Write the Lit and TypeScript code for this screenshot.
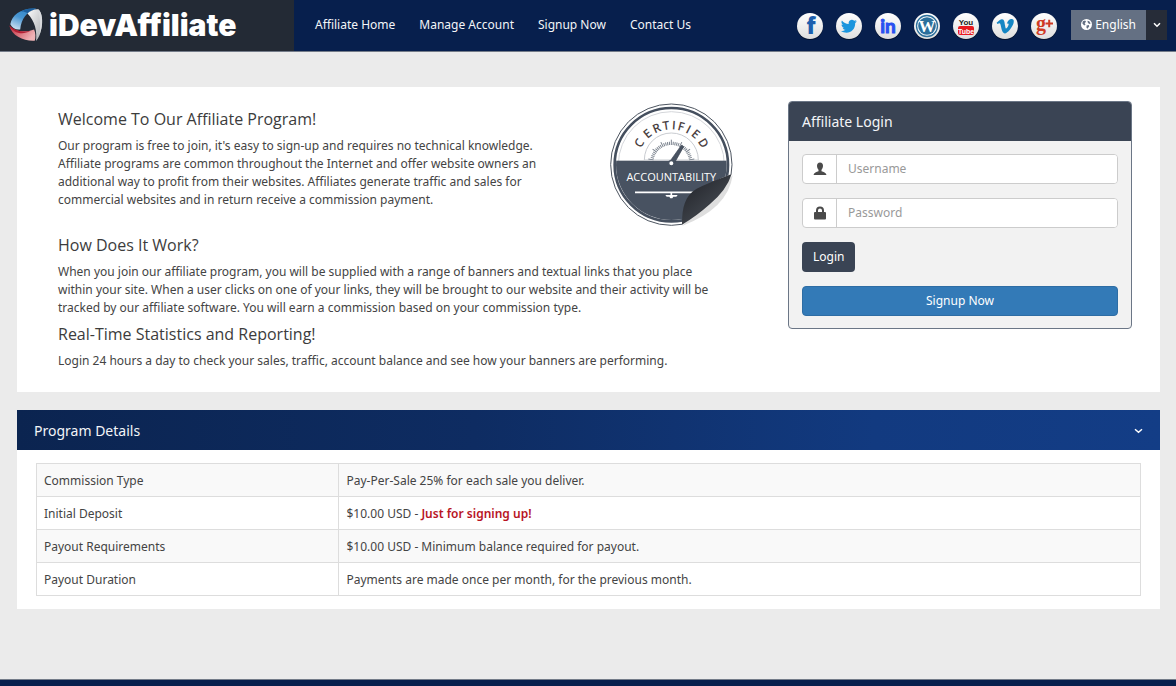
import { LitElement, html, svg, css } from "lit";
import { customElement, property } from "lit/decorators.js";

@customElement("brand-logo")
class BrandLogo extends LitElement {
  static styles = css`
    :host { display: block; }
    .brand { display: flex; align-items: center; gap: 6px; color: #fff; text-decoration: none; }
    .mark { width: 35px; height: 35px; flex: none; }
    .name { font: 900 30px/34px Inter, "Liberation Sans", sans-serif; }
  `;
  render() {
    return html`<a class="brand" href="#">
      <svg class="mark" viewBox="23 22 106 106" aria-hidden="true">
        <defs>
          <linearGradient id="b" x1="0.8" y1="0" x2="0.3" y2="1"><stop offset="0" stop-color="#2f86c8"/><stop offset=".5" stop-color="#4795d2"/><stop offset="1" stop-color="#c5dcf0"/></linearGradient>
          <linearGradient id="r" x1="0" y1="0" x2="1" y2=".5"><stop offset="0" stop-color="#c0283a"/><stop offset="1" stop-color="#f0b3b6"/></linearGradient>
          <linearGradient id="w" x1="0" y1="0" x2="1" y2="1"><stop offset="0" stop-color="#fafafa"/><stop offset="1" stop-color="#a9acb0"/></linearGradient>
        </defs>
        <path fill="url(#b)" d="M30 74C35 46 64 24 108 27C80 35 63 58 60 90C48 92 36 86 30 74Z"/>
        <path fill="#1c5f9f" d="M62 36C78 27 96 25 110 28C98 30 90 35 82 41C76 37 69 35 62 36Z"/>
        <path fill="url(#w)" d="M82 42C90 33 104 28 114 29C126 38 129 66 124 88C121 104 115 118 108 125C111 94 105 66 82 42Z"/>
        <path fill="#d9dbde" d="M115 29C127 40 129 66 124 88L118 108C122 78 121 50 112 32Z"/>
        <path fill="url(#r)" d="M27 78C38 94 72 102 102 90C107 101 107 115 104 124C72 126 34 110 27 78Z"/>
        <path fill="#b31f33" d="M27 77C40 92 68 100 90 95C66 108 38 101 27 77Z"/>
      </svg>
      <span class="name">iDevAffiliate</span>
    </a>`;
  }
}

const glyphs: Record<string, unknown> = {
  Facebook: svg`<text x="14" y="21" class="fb">f</text>`,
  Twitter: svg`<path fill="#1b95dd" d="M5 18.1c1.700.1 3.200-.3 4.500-1.300-1.500-.1-2.400-.9-2.900-2.100.5.1.9.1 1.400-.1-1.600-.4-2.500-1.600-2.500-3.200.5.200.9.400 1.400.4C5.400 10.700 5 9 5.900 7.500c1.800 2.100 4 3.300 6.800 3.500-.5-2.300.9-4.200 3-4.300 1 0 1.900.4 2.500 1.100.8-.2 1.500-.4 2.200-.8-.2.800-.7 1.300-1.400 1.800.7-.1 1.300-.3 1.900-.5-.5.7-1 1.200-1.700 1.700.2 5.800-4 9.800-8.700 9.800-2 0-3.900-.6-5.500-1.700z"/>`,
  LinkedIn: svg`<text x="13" y="20" class="li">in</text>`,
  WordPress: svg`<circle cx="13" cy="13" r="10.500" fill="#f4f7f9" stroke="#2b6f9b" stroke-width="1.300"/><circle cx="13" cy="13" r="8.800" fill="#2b6f9b"/><text x="13" y="19" class="wp">W</text>`,
  YouTube: svg`<text x="13" y="12" class="you">You</text><rect x="5" y="13" width="16" height="9" rx="2" fill="#e8191f"/><text x="13" y="20.500" class="tube">Tube</text>`,
  Vimeo: svg`<path fill="#1586c4" d="M4.600 9.700 C6.600 8 8.600 6.200 10 6.200C12.400 6.100 12.500 9.300 13 12.200C13.300 14.200 13.700 15.600 14.200 15.600C14.900 15.600 16.600 12.700 16.600 11.600C16.700 10.500 15.900 10.300 14.800 10.700C15.800 7.400 17.700 5.700 20 6C21.900 6.200 22.100 8 21.500 10.200C20.500 13.700 15.700 20.400 12.800 20.400C9.800 20.400 9.400 14.400 8.400 11.300C8 10 7.300 9.900 5.500 11.100Z"/>`,
  "Google Plus": svg`<text x="10" y="17" class="gp">g</text><path stroke="#cf3a24" stroke-width="2" d="M14.500 10.500h7.500M18.200 6.800v7.500"/>`,
};

@customElement("social-link")
class SocialLink extends LitElement {
  @property() network = "";
  static styles = css`
    :host { display: block; }
    .link { display: block; width: 26px; height: 26px; }
    .icon { display: block; width: 26px; height: 26px; overflow: visible; }
    text { text-anchor: middle; }
    .fb { font: 800 22px "Open Sans", sans-serif; fill: #1d5fae; }
    .li { font: 700 19px Lato, sans-serif; fill: #2a50f0; stroke: #2a50f0; stroke-width: 1px; }
    .wp { font: 700 17px "Liberation Serif", serif; fill: #fff; }
    .you { font: 700 8px "Liberation Sans", sans-serif; fill: #222; }
    .tube { font: 700 7px "Liberation Sans", sans-serif; fill: #fff; }
    .gp { font: 700 20px "Liberation Serif", serif; fill: #cf3a24; }
  `;
  render() {
    return html`<a class="link" href="#" aria-label=${this.network}>
      <svg class="icon" viewBox="0 0 26 26" aria-hidden="true">
        <defs><linearGradient id="disc" x2="0" y2="1"><stop offset="0" stop-color="#fff"/><stop offset="1" stop-color="#dedede"/></linearGradient></defs>
        <circle cx="13" cy="14" r="13" fill="#04132f"/>
        <circle cx="13" cy="13" r="13" fill="url(#disc)"/>
        ${glyphs[this.network]}
      </svg>
    </a>`;
  }
}

@customElement("site-header")
class SiteHeader extends LitElement {
  static styles = css`
    :host { display: block; }
    .bar { display: flex; align-items: stretch; min-height: 51px; background: #071f4d; border-bottom: 1px solid #747c89; }
    .logo { flex: 0 0 25%; box-sizing: border-box; padding: 0 8px 2px; display: flex; align-items: center; background: #232a35; }
    .nav { display: flex; align-items: center; gap: 24px; padding: 0 0 2px 21px; }
    .item { color: #f3f5f8; text-decoration: none; font-size: 12px; line-height: 18px; white-space: nowrap; }
    .social { display: flex; align-items: center; gap: 13px; margin-left: auto; padding-right: 14px; }
    .lang { display: flex; align-items: center; padding: 0 9px 2px 0; }
    button { font: 12px/18px "Noto Sans", "Open Sans", sans-serif; height: 30px; border: 0; color: #fff; cursor: pointer; display: flex; align-items: center; justify-content: center; }
    .current { background: #647083; gap: 3px; padding: 0 10px; }
    .more { background: #262c38; width: 21px; padding: 0; }
    .globe { width: 11px; height: 11px; }
    .chev { width: 8px; height: 6px; }
  `;
  render() {
    return html`<header class="bar">
      <div class="logo"><brand-logo></brand-logo></div>
      <nav class="nav">
        ${["Affiliate Home", "Manage Account", "Signup Now", "Contact Us"].map((t) => html`<a class="item" href="#">${t}</a>`)}
      </nav>
      <div class="social">${Object.keys(glyphs).map((n) => html`<social-link .network=${n}></social-link>`)}</div>
      <div class="lang">
        <button class="current" type="button">
          <svg class="globe" viewBox="0 0 12 12" aria-hidden="true"><circle cx="6" cy="6" r="6" fill="#fff"/><path fill="#647083" d="M2 2.500 4.500 1.500 5.500 3 4 4.500 5 6 3.500 7 1.500 5ZM7 2 9 2.500 10.500 5 9 5.500 7.500 4ZM6 7 8.500 6.500 9 8 7 10.500 6 9.500Z"/></svg>
          <span>English</span>
        </button>
        <button class="more" type="button" aria-label="Choose language">
          <svg class="chev" viewBox="0 0 8 6" aria-hidden="true"><path d="M1 1.200 4 4.200 7 1.200" fill="none" stroke="#fff" stroke-width="1.500"/></svg>
        </button>
      </div>
    </header>`;
  }
}

const arcLetters: [string, number][] = [["C", -58], ["E", -39], ["R", -23], ["T", -8], ["I", 4], ["F", 15], ["I", 27], ["E", 40], ["D", 58]];

@customElement("accountability-seal")
class AccountabilitySeal extends LitElement {
  static styles = css`
    :host { display: block; }
    .seal { display: block; width: 125px; height: 125px; overflow: visible; }
    text { text-anchor: middle; font-family: "Open Sans", sans-serif; }
    .arc { font-size: 36px; font-weight: 600; fill: #4a4142; }
    .band { font-size: 33px; fill: #fff; }
  `;
  render() {
    const ticks = Array.from({ length: 31 }, (_, i) => -80 + (i * 160) / 30);
    return html`<svg class="seal" viewBox="27 20 375 375" role="img" aria-label="Certified Accountability">
      <defs>
        <linearGradient id="fold" x1="0.250" y1="0.250" x2="0.700" y2="0.800"><stop offset="0" stop-color="#2a2d33"/><stop offset=".6" stop-color="#3a3e45"/><stop offset="1" stop-color="#24262b"/></linearGradient>
        <clipPath id="disc"><circle cx="214" cy="208" r="166"/></clipPath>
        <clipPath id="body"><path d="M0 0H430V225L395 236Q280 275 246 388L230 430H0Z"/></clipPath>
      </defs>
      <path d="M398 240Q384 340 246 392Z" fill="#dedede"/>
      <g clip-path="url(#body)">
        <circle cx="214" cy="208" r="182" fill="#fff" stroke="#4d5560" stroke-width="3"/>
        <circle cx="214" cy="208" r="170" fill="#fff" stroke="#454f5e" stroke-width="8"/>
        <circle cx="214" cy="208" r="159" fill="none" stroke="#d4d6da" stroke-width="3"/>
        <rect x="40" y="196" width="350" height="190" fill="#485261" clip-path="url(#disc)"/>
        <path d="M133 194A81 81 0 0 1 295 194Z" fill="#fff" stroke="#c9ccd1" stroke-width="3"/>
        ${ticks.map((a, i) => svg`<path transform="rotate(${a} 214 203)" d="M214 ${i % 5 ? 139 : 133}V149" stroke="#7b838e" stroke-width="3"/>`)}
        ${arcLetters.map(([c, a]) => svg`<text class="arc" transform="rotate(${a} 214 203)" x="214" y="102">${c}</text>`)}
        <path d="M209 199 244 150 251 154 221 207Z" fill="#485261" stroke="#38414e" stroke-width="2"/>
        <circle cx="214" cy="204" r="8" fill="#fff" stroke="#485261" stroke-width="4"/>
        <path d="M105 291H320M214 291V303" stroke="#fff" stroke-width="5"/>
        <path d="M196 299H233L229 304H220L217 309H211L208 304H200Z" fill="#fff"/>
      </g>
      <path d="M395 236Q322 264 290 280C255 300 246 335 246 388Q290 362 330 326Q380 284 395 236Z" fill="url(#fold)"/>
      <text class="band" x="214" y="257">ACCOUNTABILITY</text>
    </svg>`;
  }
}

@customElement("login-card")
class LoginCard extends LitElement {
  static styles = css`
    :host { display: block; }
    .card { border: 1px solid #6b7686; border-radius: 4px; overflow: hidden; background: #f2f2f2; }
    .title { margin: 0; padding: 9px 13px; font-size: 14px; line-height: 21px; font-weight: 400; color: #f3f5f8; background: #3a4454; }
    .form { display: flex; flex-direction: column; gap: 14px; padding: 13px 13px 12px; align-items: stretch; }
    .group { display: flex; height: 30px; box-sizing: border-box; border: 1px solid #ccc; border-radius: 4px; background: #fff; overflow: hidden; }
    .addon { width: 33px; flex: none; display: flex; align-items: center; justify-content: center; border-right: 1px solid #ccc; }
    .glyph { width: 14px; height: 14px; }
    .field { flex: 1; min-width: 0; border: 0; outline: 0; padding: 0 11px; background: #fff; color: #444; font: 12px/18px "Noto Sans", "Open Sans", sans-serif; }
    .field::placeholder { color: #999; opacity: 1; }
    .btn { height: 30px; padding: 0 11px; border: 0; border-radius: 4px; color: #fff; font: 12px/18px "Noto Sans", "Open Sans", sans-serif; cursor: pointer; }
    .login { align-self: flex-start; background: #3a4454; }
    .signup { background: #337ab7; border: 1px solid #2e6da4; }
  `;
  render() {
    return html`<section class="card">
      <h2 class="title">Affiliate Login</h2>
      <form class="form">
        <div class="group">
          <label class="addon" for="user" aria-label="Username"><svg class="glyph" viewBox="0 0 14 14" aria-hidden="true"><path fill="#4a4a4a" d="M7 .5C9 .5 10 1.800 10 3.800 10 5.500 9.300 7 8.500 7.800V9.200C10.500 10 13 10.700 13.500 13H.5C1 10.700 3.500 10 5.500 9.200V7.800C4.700 7 4 5.500 4 3.800 4 1.800 5 .5 7 .5Z"/></svg></label>
          <input class="field" id="user" type="text" placeholder="Username" />
        </div>
        <div class="group">
          <label class="addon" for="pass" aria-label="Password"><svg class="glyph" viewBox="0 0 14 14" aria-hidden="true"><path fill="none" stroke="#4a4a4a" stroke-width="2" d="M4 7V4.500C4 .6 10 .6 10 4.500V7"/><rect x="1" y="6" width="12" height="7.500" rx="1" fill="#4a4a4a"/></svg></label>
          <input class="field" id="pass" type="password" placeholder="Password" />
        </div>
        <button class="btn login" type="button">Login</button>
        <button class="btn signup" type="button">Signup Now</button>
      </form>
    </section>`;
  }
}

@customElement("program-details")
class ProgramDetails extends LitElement {
  static styles = css`
    :host { display: block; }
    .panel { background: #fff; }
    .head { display: flex; align-items: center; justify-content: space-between; padding: 10px 17px 8px; background: linear-gradient(90deg, #0b2450, #0e2c62 40%, #123a80 75%, #133d86); }
    .title { margin: 0; font-size: 14px; line-height: 22px; font-weight: 400; color: #f3f5f8; }
    .chev { width: 9px; height: 6px; }
    .toggle { display: flex; padding: 0; border: 0; background: none; cursor: pointer; }
    .body { padding: 13px 19px; }
    .data { width: 100%; border-collapse: collapse; table-layout: fixed; }
    .label { width: 27.4%; }
    th, td { box-sizing: border-box; border: 1px solid #ddd; padding: 8px 7px 6px; text-align: left; font-weight: 400; font-size: 12px; line-height: 18px; color: #444; }
    tr:nth-child(odd) { background: #f9f9f9; }
    .bonus { font-weight: 600; color: #b8141f; }
  `;
  render() {
    const rows = [
      ["Commission Type", "Pay-Per-Sale 25% for each sale you deliver."],
      ["Initial Deposit", html`$10.00 USD - <strong class="bonus">Just for signing up!</strong>`],
      ["Payout Requirements", "$10.00 USD - Minimum balance required for payout."],
      ["Payout Duration", "Payments are made once per month, for the previous month."],
    ];
    return html`<section class="panel">
      <div class="head">
        <h2 class="title">Program Details</h2>
        <button class="toggle" type="button" aria-label="Collapse"><svg class="chev" viewBox="0 0 9 6" aria-hidden="true"><path d="M1 1.200 4.500 4.200 8 1.200" fill="none" stroke="#fff" stroke-width="1.500"/></svg></button>
      </div>
      <div class="body">
        <table class="data"><tbody>
          ${rows.map(([k, v]) => html`<tr><th class="label" scope="row">${k}</th><td>${v}</td></tr>`)}
        </tbody></table>
      </div>
    </section>`;
  }
}

@customElement("app-root")
class AppRoot extends LitElement {
  static styles = css`
    :host { display: flex; flex-direction: column; min-height: 100vh; background: #ebebeb; color: #444; font: 12px/18px "Noto Sans", "Open Sans", sans-serif; }
    .main { flex: 1; display: flex; flex-direction: column; gap: 18px; padding: 35px 16px 70px 17px; }
    .intro { display: grid; grid-template-columns: minmax(0, 2fr) minmax(0, 1fr); gap: 42px; align-items: start; padding: 14px 28px 22px 41px; background: #fff; }
    .lead { display: flex; gap: 24px; justify-content: space-between; padding: 1px 12px 8px 0; }
    .words { flex: 1; min-width: 0; max-width: 510px; padding-top: 7px; }
    .seal { flex: none; }
    .heading { margin: 0 0 8px; font: 400 16px/20px "Open Sans", sans-serif; color: #3c3c3c; }
    .para { margin: 0 0 7px; max-width: 672px; }
    .last { margin: 0; }
    .footer { height: 6px; background: #071f4d; border-top: 1px solid #747c89; }
  `;
  render() {
    return html`<site-header></site-header>
      <main class="main">
        <section class="intro">
          <div>
            <div class="lead">
              <div class="words">
                <h1 class="heading">Welcome To Our Affiliate Program!</h1>
                <p class="para">Our program is free to join, it's easy to sign-up and requires no technical knowledge. Affiliate programs are common throughout the Internet and offer website owners an additional way to profit from their websites. Affiliates generate traffic and sales for commercial websites and in return receive a commission payment.</p>
              </div>
              <accountability-seal class="seal"></accountability-seal>
            </div>
            <h2 class="heading">How Does It Work?</h2>
            <p class="para">When you join our affiliate program, you will be supplied with a range of banners and textual links that you place within your site. When a user clicks on one of your links, they will be brought to our website and their activity will be tracked by our affiliate software. You will earn a commission based on your commission type.</p>
            <h2 class="heading">Real-Time Statistics and Reporting!</h2>
            <p class="para last">Login 24 hours a day to check your sales, traffic, account balance and see how your banners are performing.</p>
          </div>
          <login-card></login-card>
        </section>
        <program-details></program-details>
      </main>
      <footer class="footer"></footer>`;
  }
}
